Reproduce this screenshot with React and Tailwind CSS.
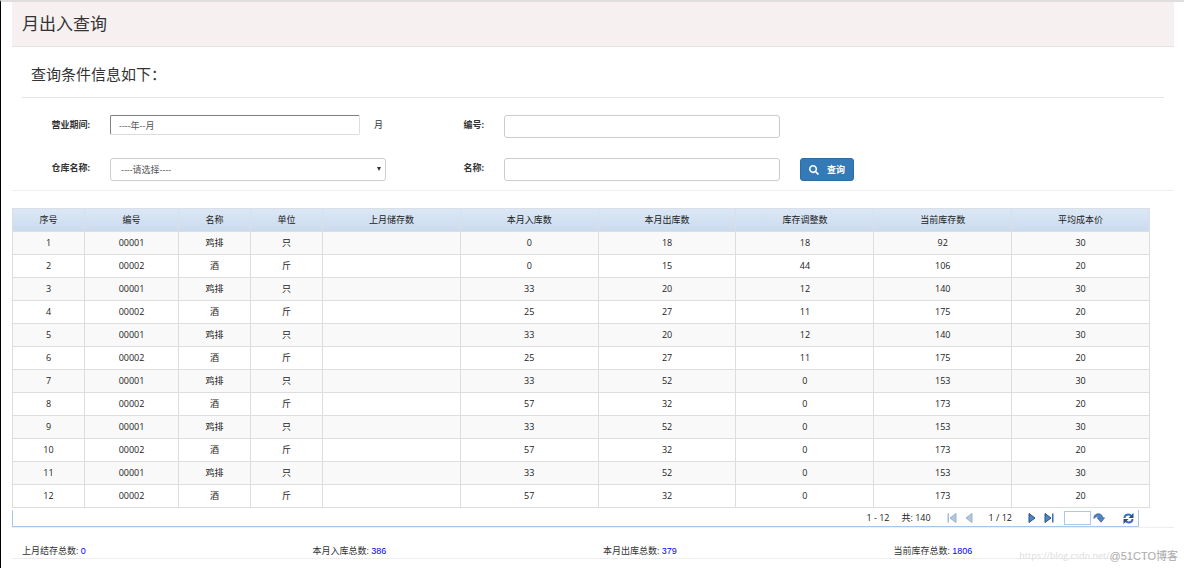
import { FaSearch } from "react-icons/fa";

const columns = [
  { title: "序号", width: "w-[72px]" },
  { title: "编号", width: "w-[94px]" },
  { title: "名称", width: "w-[72px]" },
  { title: "单位", width: "w-[72px]" },
  { title: "上月储存数", width: "" },
  { title: "本月入库数", width: "" },
  { title: "本月出库数", width: "" },
  { title: "库存调整数", width: "" },
  { title: "当前库存数", width: "" },
  { title: "平均成本价", width: "" },
];

const rows = [
  ["00001", "鸡排", "只", "", 0, 18, 18, 92, 30],
  ["00002", "酒", "斤", "", 0, 15, 44, 106, 20],
  ["00001", "鸡排", "只", "", 33, 20, 12, 140, 30],
  ["00002", "酒", "斤", "", 25, 27, 11, 175, 20],
  ["00001", "鸡排", "只", "", 33, 20, 12, 140, 30],
  ["00002", "酒", "斤", "", 25, 27, 11, 175, 20],
  ["00001", "鸡排", "只", "", 33, 52, 0, 153, 30],
  ["00002", "酒", "斤", "", 57, 32, 0, 173, 20],
  ["00001", "鸡排", "只", "", 33, 52, 0, 153, 30],
  ["00002", "酒", "斤", "", 57, 32, 0, 173, 20],
  ["00001", "鸡排", "只", "", 33, 52, 0, 153, 30],
  ["00002", "酒", "斤", "", 57, 32, 0, 173, 20],
];

const totals = [
  { label: "上月结存总数", value: 0 },
  { label: "本月入库总数", value: 386 },
  { label: "本月出库总数", value: 379 },
  { label: "当前库存总数", value: 1806 },
];

const labelClass = "self-start text-right leading-5 font-bold text-[#333]";
const fieldClass =
  "h-[23px] w-full min-w-0 rounded-[3px] border border-[#ccc] bg-white px-2 text-[#555] outline-none focus:border-[#66afe9]";

function SearchForm() {
  return (
    <form
      onSubmit={(event) => event.preventDefault()}
      className="grid grid-cols-[78px_minmax(0,276px)_78px_minmax(0,276px)_auto] items-center justify-start gap-x-5 gap-y-5 border-b border-[#eee] pt-[17px] pb-[9px]"
    >
      <label htmlFor="period" className={labelClass}>营业期间:</label>
      <div className="flex h-[23px] items-start gap-[14px]">
        <input
          id="period"
          type="text"
          placeholder="----年--月"
          className="h-5 w-[250px] min-w-0 rounded-[2px] border border-t-[#808080] border-r-[#ddd] border-b-[#ddd] border-l-[#808080] px-2 outline-none placeholder:text-[#555]"
        />
        <span className="leading-5">月</span>
      </div>
      <label htmlFor="code" className={labelClass}>编号:</label>
      <input id="code" type="text" className={fieldClass} />
      <span />

      <label htmlFor="warehouse" className={labelClass}>仓库名称:</label>
      <div className="relative">
        <select id="warehouse" className={`${fieldClass} appearance-none pl-[10px]`}>
          <option>----请选择----</option>
        </select>
        <svg viewBox="0 0 4 4" className="pointer-events-none absolute top-[9px] right-[5px] size-1 fill-[#333]" aria-hidden="true">
          <path d="M0 0h4L2 4z" />
        </svg>
      </div>
      <label htmlFor="name" className={labelClass}>名称:</label>
      <input id="name" type="text" className={fieldClass} />
      <button
        type="submit"
        className="flex h-[23px] items-center gap-2 rounded-[3px] border border-[#2e6da4] bg-[#337ab7] px-2 font-bold text-white"
      >
        <FaSearch className="size-[10px]" />
        <span>查询</span>
      </button>
    </form>
  );
}

function StockTable() {
  return (
    <table className="w-full table-fixed border-collapse text-center text-[#222]">
      <thead>
        <tr className="h-[23px] bg-linear-to-b from-[#dbe7f5] to-[#cadbee]">
          {columns.map((column) => (
            <th key={column.title} className={`${column.width} border border-[#dadfe5] p-0 font-normal`}>
              {column.title}
            </th>
          ))}
        </tr>
      </thead>
      <tbody>
        {rows.map((row, index) => (
          <tr key={index} className="h-[23px] odd:bg-[#f9f9f9]">
            <td className="border border-[#ddd] p-0">{index + 1}</td>
            {row.map((cell, i) => (
              <td key={i} className="border border-[#ddd] p-0">{cell}</td>
            ))}
          </tr>
        ))}
      </tbody>
    </table>
  );
}

function PagerIcon({ flip, bar, disabled }) {
  return (
    <svg
      viewBox="0 0 10 10"
      className={`size-[10px] ${flip ? "-scale-x-100" : ""} ${disabled ? "opacity-45" : ""}`}
      aria-hidden="true"
    >
      <path d="M1 .5v9L7 5z" fill="#4f86c6" stroke="#24508f" strokeWidth="1" strokeLinejoin="round" />
      {bar && <path d="M8 .5h1.500v9H8z" fill="#3a6fb0" />}
    </svg>
  );
}

function Pager() {
  return (
    <div className="mt-[2px] mr-[11px] flex h-[17px] items-center justify-end border-x border-b border-[#a9c6e8] pr-1 text-[#222]">
      <span>1 - 12</span>
      <span className="ml-3">共: 140</span>
      <button type="button" aria-label="首页" disabled className="ml-4"><PagerIcon flip bar disabled /></button>
      <button type="button" aria-label="上一页" disabled className="ml-[6px]"><PagerIcon flip disabled /></button>
      <span className="ml-4">1 / 12</span>
      <button type="button" aria-label="下一页" className="ml-4"><PagerIcon /></button>
      <button type="button" aria-label="末页" className="ml-[6px]"><PagerIcon bar /></button>
      <input type="text" aria-label="页码" className="ml-[10px] h-[14px] w-[27px] border border-[#a9c9ee] bg-white px-1 outline-none" />
      <button type="button" aria-label="跳转" className="ml-[2px]">
        <svg viewBox="0 0 12 10" className="h-[10px] w-3" aria-hidden="true">
          <path d="M1 5.500C.5 2.500 3 .8 5.500 .8c2.500 0 4 1.700 4 4H11.500L8 9.300 4.300 4.800H6.300C5.800 3.200 3 3 1 5.500z" fill="#4f86c6" stroke="#24508f" strokeWidth=".7" />
        </svg>
      </button>
      <button type="button" aria-label="刷新" className="ml-[18px]">
        <svg viewBox="0 0 11 11" className="size-[11px]" fill="none" stroke="#3b70b3" aria-hidden="true">
          <path d="M1.500 5C1.500 1.500 6 .5 8.500 3M9.500 6c0 3.500-4.500 4.500-7 2" strokeWidth="2" />
          <path d="M10.500 0v5h-5zM.5 11V6h5z" fill="#24508f" stroke="none" />
        </svg>
      </button>
    </div>
  );
}

export default function App() {
  return (
    <div className="relative min-h-screen overflow-hidden border-t-2 border-l border-t-[#dedede] border-l-black bg-white pr-[10px] pl-[11px] font-['Open_Sans','Noto_Sans_CJK_SC',sans-serif] text-[9px] leading-3 text-[#333]">
      <h1 className="border-b border-[#e7e3e3] bg-[#f6f0f0] px-[10px] pt-[10px] pb-[10px] text-[17px] leading-6 font-normal">
        月出入查询
      </h1>
      <h2 className="mx-[10px] border-b border-[#e5e5e5] px-[9px] pt-[15px] pb-[11px] text-[15px] leading-6 font-normal">
        查询条件信息如下：
      </h2>
      <SearchForm />
      <div className="mt-[17px] border-b border-[#eee]">
        <div className="pr-6">
          <StockTable />
          <Pager />
        </div>
      </div>
      <div className="grid grid-cols-4 border-b border-[#eee] pt-[17px]">
        {totals.map((total) => (
          <p key={total.label} className="px-[10px] pb-px">
            {total.label}: <span className="font-['Liberation_Sans',sans-serif] text-[#00f]">{total.value}</span>
          </p>
        ))}
      </div>
      <div className="pointer-events-none absolute right-[6px] bottom-1 flex whitespace-nowrap">
        <span className="text-[9px] leading-4 text-[#ddd]">https://blog.csdn.net/</span>
        <span className="font-['Liberation_Sans','Noto_Sans_CJK_SC',sans-serif] text-[11px] leading-4 text-[#aaa]">@51CTO博客</span>
      </div>
    </div>
  );
}
